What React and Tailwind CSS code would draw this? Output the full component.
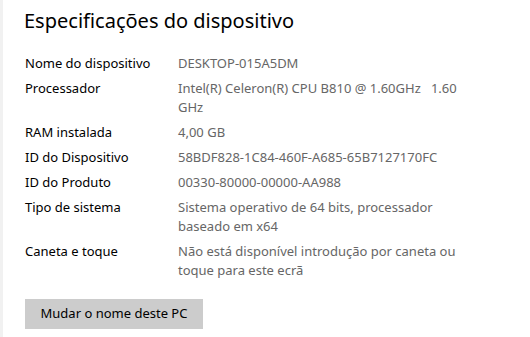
const specs = [
  { label: "Nome do dispositivo", value: "DESKTOP-015A5DM" },
  { label: "Processador", value: "Intel(R) Celeron(R) CPU B810 @ 1.60GHz\u00a0\u00a0 1.60 GHz" },
  { label: "RAM instalada", value: "4,00 GB" },
  { label: "ID do Dispositivo", value: "58BDF828-1C84-460F-A685-65B7127170FC" },
  { label: "ID do Produto", value: "00330-80000-00000-AA988" },
  { label: "Tipo de sistema", value: "Sistema operativo de 64 bits, processador baseado em x64" },
  { label: "Caneta e toque", value: "Não está disponível introdução por caneta ou toque para este ecrã" },
];

export default function App() {
  return (
    <div
      className="h-[337px] w-[530px] overflow-hidden border-l-[3px] border-[#f1f1f1] bg-white pl-[21px] pt-[6px]"
      style={{ fontFamily: '"Noto Sans", "Open Sans", sans-serif' }}
    >
      <h1 className="text-[20px] leading-[30px] text-black">Especificações do dispositivo</h1>

      <dl className="mt-[18px] flex flex-col gap-[6px] pl-px text-[13px] leading-[19px]">
        {specs.map((row) => (
          <div key={row.label} className="flex">
            <dt className="w-[153px] shrink-0 text-black">{row.label}</dt>
            <dd className="w-[290px] text-[#666666]">{row.value}</dd>
          </div>
        ))}
      </dl>

      <button
        type="button"
        className="mt-[19px] ml-px h-[30px] w-[178px] bg-[#cccccc] text-[13px] text-black"
      >
        Mudar o nome deste PC
      </button>
    </div>
  );
}
